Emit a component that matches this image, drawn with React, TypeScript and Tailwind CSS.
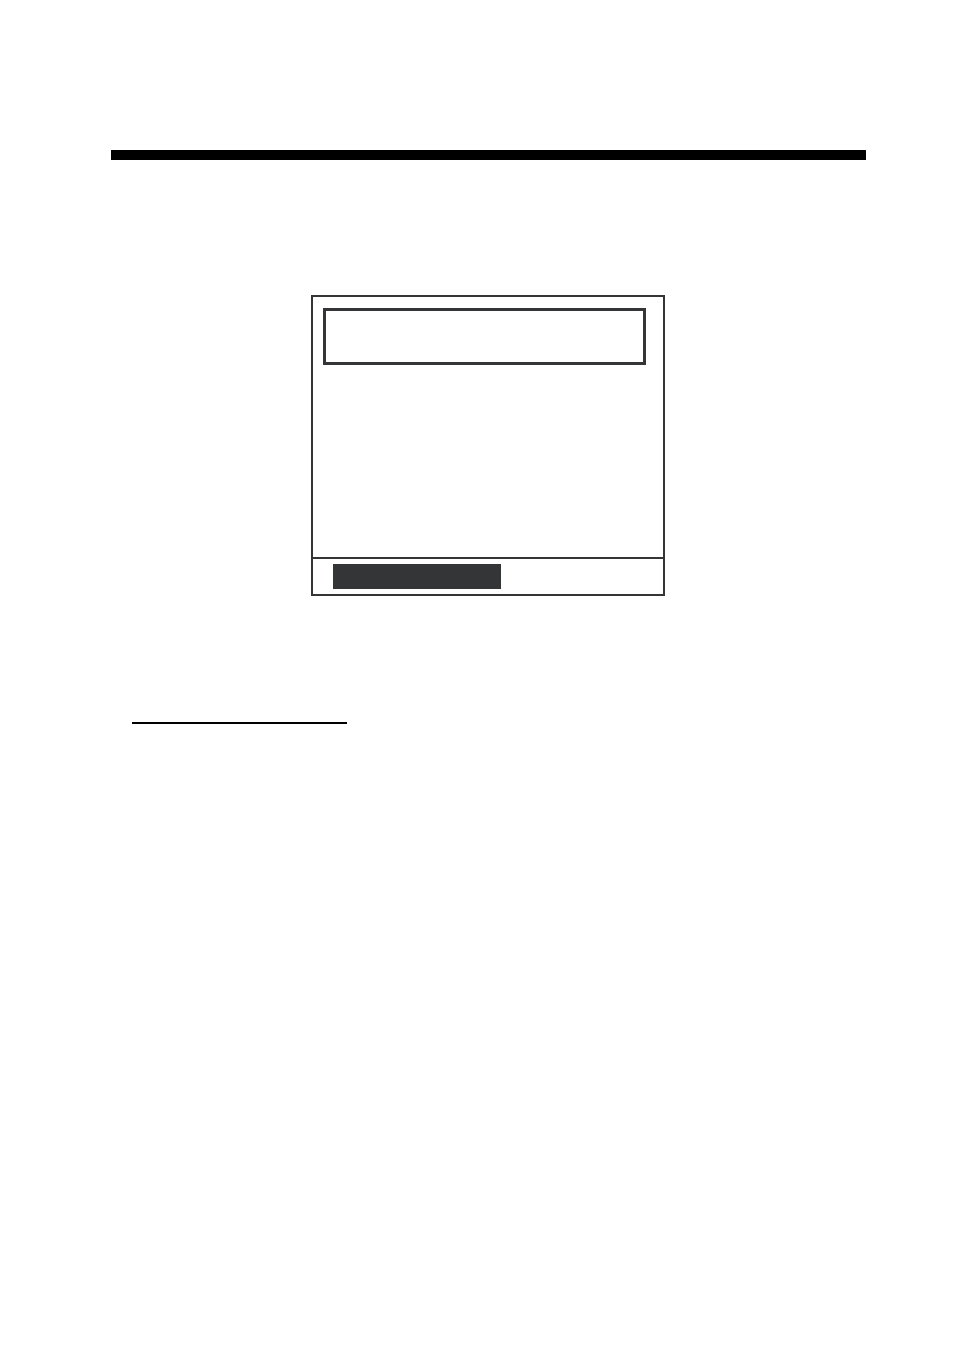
import React from "react";

const DisplayPanel = () => {
  return (
    <div className="w-[354px] border-2 border-[#343537]">
      {/* Main area with the highlighted field */}
      <div className="h-[262px] border-b-2 border-[#343537] pt-[11px] pl-[10px] pr-[17px]">
        <div className="h-[57px] border-3 border-[#343537]" />
      </div>

      {/* Footer strip */}
      <div className="py-[5px] pl-5">
        <div className="h-[25px] w-[168px] bg-[#343537]" />
      </div>
    </div>
  );
};

const App = () => {
  return (
    <main className="min-h-screen bg-white pt-[150px] pr-[88px] pb-16 pl-[111px]">
      <hr className="h-[10px] border-0 bg-black" />

      <section className="mt-[135px] flex justify-center pr-px">
        <DisplayPanel />
      </section>

      <hr className="mt-[126px] ml-[21px] h-0.5 w-[215px] border-0 bg-black" />
    </main>
  );
};

export default App;
